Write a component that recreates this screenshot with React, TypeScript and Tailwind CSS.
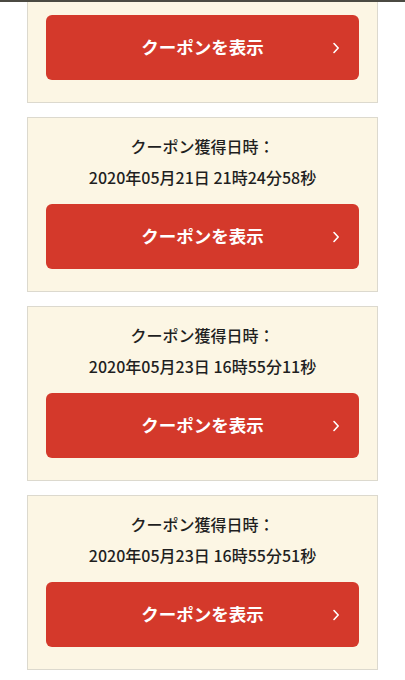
const coupons = [
  { date: "" },
  { date: "2020年05月21日 21時24分58秒" },
  { date: "2020年05月23日 16時55分11秒" },
  { date: "2020年05月23日 16時55分51秒" },
];

const Chevron = () => (
  <svg width="8" height="12" viewBox="0 0 8 12" fill="none">
    <path d="M2 1.5 L6.2 6 L2 10.5" stroke="white" strokeWidth="1.6" strokeLinecap="round" strokeLinejoin="round" />
  </svg>
);

const CouponCard: React.FC<{ date: string }> = ({ date }) => {
  return (
    <div className="mx-[27px] h-[175px] border border-[#dcd9ce] bg-[#fcf6e4] px-[18px] pt-[13px] pb-[22px] flex flex-col">
      <div className="flex-1 flex flex-col items-center text-[16px] leading-[31px] text-[#1f1f1f] font-medium">
        {date !== "" && (
          <>
            <div>クーポン獲得日時：</div>
            <div>{date}</div>
          </>
        )}
      </div>
      <button className="relative h-[65px] w-full rounded-[6px] bg-[#d4392b] text-white text-[17.5px] font-bold flex items-center justify-center">
        <span>クーポンを表示</span>
        <span className="absolute right-[19px] top-[27px]">
          <Chevron />
        </span>
      </button>
    </div>
  );
};

export default function App() {
  return (
    <div
      className="relative w-[405px] h-[680px] overflow-hidden bg-white"
      style={{ fontFamily: '"Noto Sans CJK JP", "Noto Sans", sans-serif' }}
    >
      <div className="absolute top-0 left-0 right-0 h-[2px] bg-[#4b4a42] z-10" />
      <div className="-mt-[72px] flex flex-col gap-[14px]">
        {coupons.map((c, i) => (
          <CouponCard key={`coupon-${i}`} date={c.date} />
        ))}
      </div>
    </div>
  );
}
